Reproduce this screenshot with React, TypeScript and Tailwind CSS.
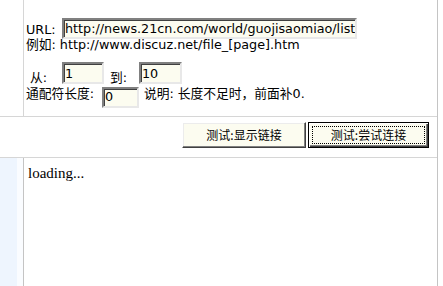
const INPUT =
  'h-[21px] border-2 border-t-[#808080] border-l-[#808080] border-r-[#e8e8e8] border-b-[#e8e8e8] bg-[#fcfcf0] pl-[1px] text-black outline-none shadow-[inset_1px_1px_0_#404040]';

function Field({ value, className }: { value: string; className: string }) {
  return <input readOnly value={value} className={`${INPUT} ${className}`} />;
}

export default function App() {
  return (
    <div className="h-[286px] w-[443px] overflow-hidden bg-white text-[12.75px] text-black font-['DejaVu_Sans','Noto_Sans_CJK_SC',sans-serif]">
      <div className="flex h-full w-[438px] flex-col border-r border-[#c4c4c4]">
        {/* form */}
        <section className="flex h-[117px] shrink-0 border-b border-[#d6d6d6]">
          <div className="w-[24px] border-r border-[#d6d6d6]" />
          <div className="flex flex-col pl-[2px]">
            <div className="mt-[18px] flex h-[21px] items-start">
              <span className="mt-[7px] w-[36px] leading-[10px]">URL:</span>
              <Field value="http://news.21cn.com/world/guojisaomiao/list" className="w-[295px]" />
            </div>
            <div className="mt-[1px] leading-[10px] whitespace-nowrap">
              例如: http://www.discuz.net/file_[page].htm
            </div>
            <div className="mt-[12px] flex h-[22px] items-start">
              <span className="mt-[10px] w-[36px] leading-[12px]">&nbsp;从:</span>
              <Field value="1" className="h-[22px] w-[42px]" />
              <span className="ml-[6px] mt-[10px] w-[29px] leading-[12px]">到:</span>
              <Field value="10" className="h-[22px] w-[43px]" />
            </div>
            <div className="mt-[3px] flex h-[20px] items-start whitespace-nowrap">
              <span className="w-[76px] leading-[14px]">通配符长度:</span>
              <Field value="0" className="h-[20px] w-[37px] pb-[3px]" />
              <span className="ml-[5px] leading-[14px]">说明: 长度不足时，前面补0.</span>
            </div>
          </div>
        </section>

        {/* actions */}
        <section className="flex h-[41px] shrink-0 items-start justify-end gap-[2px] border-b border-[#d6d6d6] pr-[8px] pt-[5px] text-[12px] font-['Noto_Sans_CJK_SC',sans-serif]">
          <button className="h-[26px] w-[124px] border border-t-white border-l-white border-r-[#404040] border-b-[#404040] bg-[#fcfcf0] leading-none shadow-[inset_-1px_-1px_0_#808080,inset_1px_1px_0_#ececec]">
            测试:显示链接
          </button>
          <button className="h-[26px] w-[121px] border border-black bg-[#fcfcf0] leading-none shadow-[inset_1px_1px_0_#ffffff,inset_-1px_-1px_0_#404040,inset_-2px_-2px_0_#808080] [outline:1px_dotted_#000] [outline-offset:-5px]">
            测试:尝试连接
          </button>
        </section>

        {/* output */}
        <section className="flex flex-1">
          <div className="w-[17px] bg-[#eef5fe]" />
          <div className="w-[7px] border-r border-[#c4c4c4] bg-[#fafcff]" />
          <div className="pl-[4px] pt-[6px] text-[15px] leading-[18px] font-['Liberation_Serif',serif]">loading...</div>
        </section>
      </div>
    </div>
  );
}
